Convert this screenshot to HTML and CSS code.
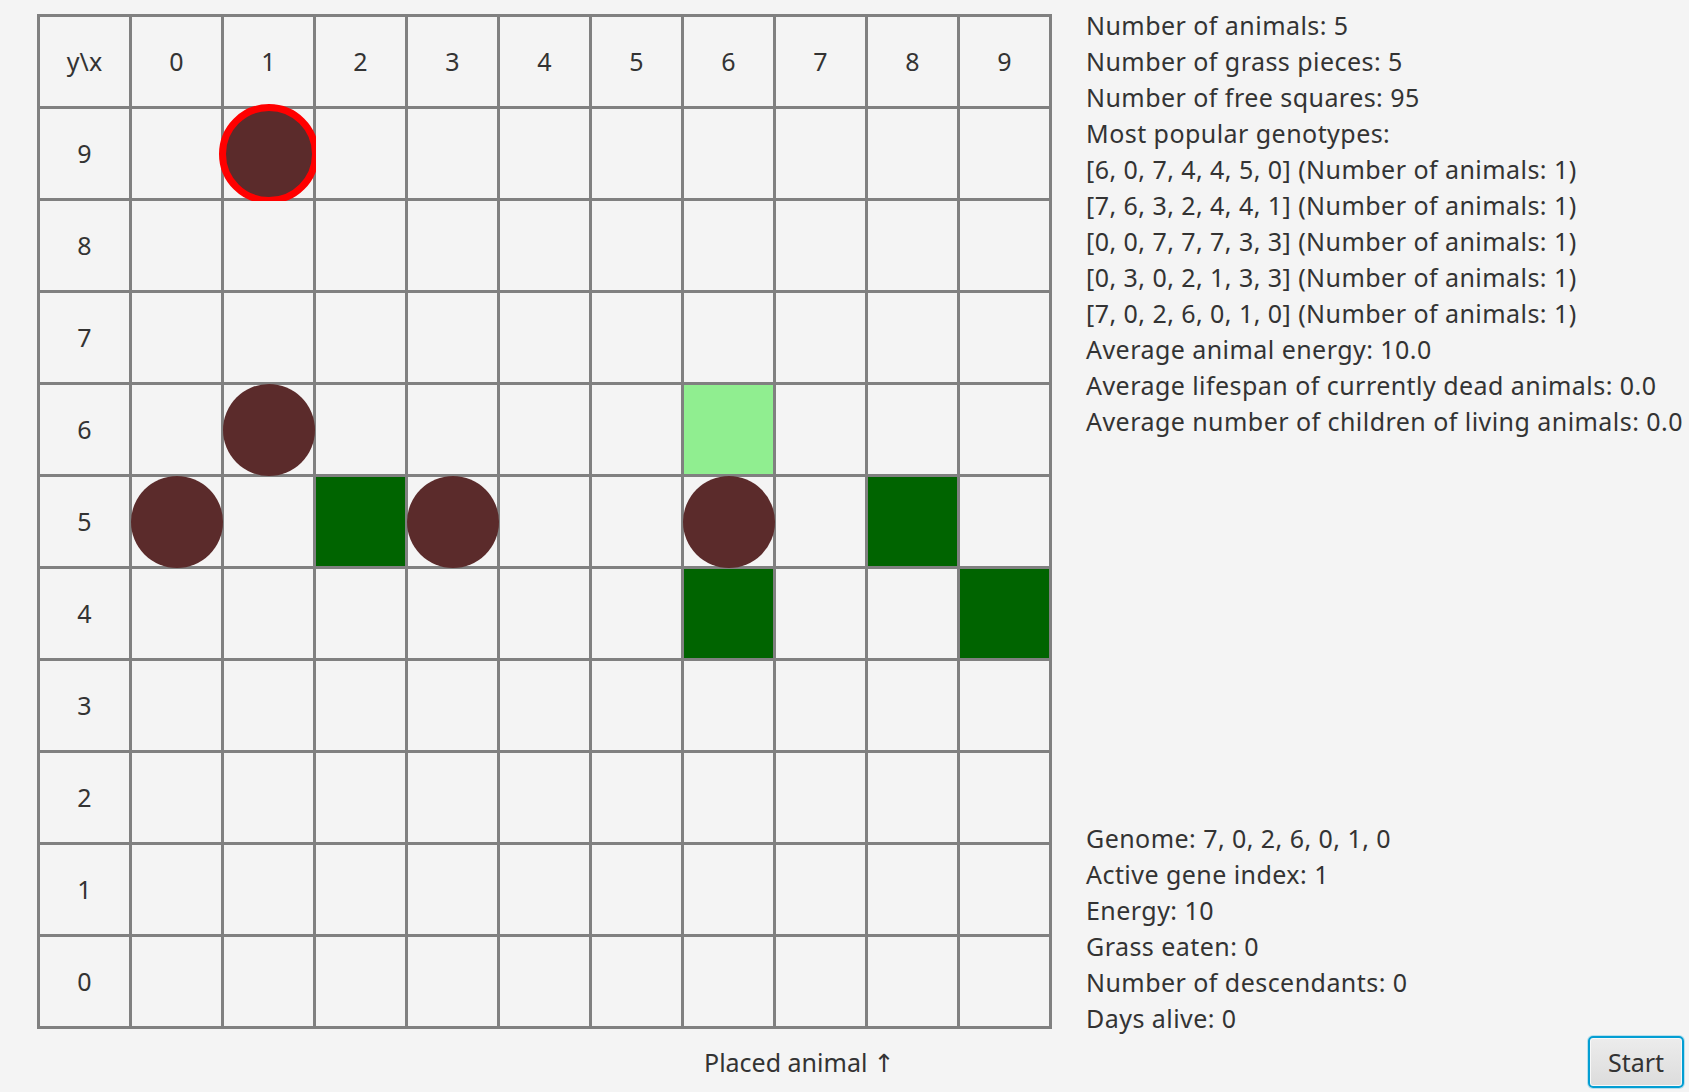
FILE: index.html
```html
<!DOCTYPE html>
<html>
<head>
<meta charset="utf-8">
<link rel="stylesheet" href="styles.css">
</head>
<body>
<div class="main">
  <div class="board">
    <div class="cell">y\x</div><div class="cell">0</div><div class="cell">1</div><div class="cell">2</div><div class="cell">3</div><div class="cell">4</div><div class="cell">5</div><div class="cell">6</div><div class="cell">7</div><div class="cell">8</div><div class="cell">9</div>

    <div class="cell">9</div><div class="cell"></div><div class="cell"><div class="animal selected"></div></div><div class="cell"></div><div class="cell"></div><div class="cell"></div><div class="cell"></div><div class="cell"></div><div class="cell"></div><div class="cell"></div><div class="cell"></div>

    <div class="cell">8</div><div class="cell"></div><div class="cell"></div><div class="cell"></div><div class="cell"></div><div class="cell"></div><div class="cell"></div><div class="cell"></div><div class="cell"></div><div class="cell"></div><div class="cell"></div>

    <div class="cell">7</div><div class="cell"></div><div class="cell"></div><div class="cell"></div><div class="cell"></div><div class="cell"></div><div class="cell"></div><div class="cell"></div><div class="cell"></div><div class="cell"></div><div class="cell"></div>

    <div class="cell">6</div><div class="cell"></div><div class="cell"><div class="animal"></div></div><div class="cell"></div><div class="cell"></div><div class="cell"></div><div class="cell"></div><div class="cell grass-light"></div><div class="cell"></div><div class="cell"></div><div class="cell"></div>

    <div class="cell">5</div><div class="cell"><div class="animal"></div></div><div class="cell"></div><div class="cell grass-dark"></div><div class="cell"><div class="animal"></div></div><div class="cell"></div><div class="cell"></div><div class="cell"><div class="animal"></div></div><div class="cell"></div><div class="cell grass-dark"></div><div class="cell"></div>

    <div class="cell">4</div><div class="cell"></div><div class="cell"></div><div class="cell"></div><div class="cell"></div><div class="cell"></div><div class="cell"></div><div class="cell grass-dark"></div><div class="cell"></div><div class="cell"></div><div class="cell grass-dark"></div>

    <div class="cell">3</div><div class="cell"></div><div class="cell"></div><div class="cell"></div><div class="cell"></div><div class="cell"></div><div class="cell"></div><div class="cell"></div><div class="cell"></div><div class="cell"></div><div class="cell"></div>

    <div class="cell">2</div><div class="cell"></div><div class="cell"></div><div class="cell"></div><div class="cell"></div><div class="cell"></div><div class="cell"></div><div class="cell"></div><div class="cell"></div><div class="cell"></div><div class="cell"></div>

    <div class="cell">1</div><div class="cell"></div><div class="cell"></div><div class="cell"></div><div class="cell"></div><div class="cell"></div><div class="cell"></div><div class="cell"></div><div class="cell"></div><div class="cell"></div><div class="cell"></div>

    <div class="cell">0</div><div class="cell"></div><div class="cell"></div><div class="cell"></div><div class="cell"></div><div class="cell"></div><div class="cell"></div><div class="cell"></div><div class="cell"></div><div class="cell"></div><div class="cell"></div>
  </div>

  <div class="side">
    <div class="stats">
      <div>Number of animals: 5</div>
      <div>Number of grass pieces: 5</div>
      <div>Number of free squares: 95</div>
      <div>Most popular genotypes:</div>
      <div>[6, 0, 7, 4, 4, 5, 0] (Number of animals: 1)</div>
      <div>[7, 6, 3, 2, 4, 4, 1] (Number of animals: 1)</div>
      <div>[0, 0, 7, 7, 7, 3, 3] (Number of animals: 1)</div>
      <div>[0, 3, 0, 2, 1, 3, 3] (Number of animals: 1)</div>
      <div>[7, 0, 2, 6, 0, 1, 0] (Number of animals: 1)</div>
      <div>Average animal energy: 10.0</div>
      <div>Average lifespan of currently dead animals: 0.0</div>
      <div>Average number of children of living animals: 0.0</div>
    </div>
    <div class="stats">
      <div>Genome: 7, 0, 2, 6, 0, 1, 0</div>
      <div>Active gene index: 1</div>
      <div>Energy: 10</div>
      <div>Grass eaten: 0</div>
      <div>Number of descendants: 0</div>
      <div>Days alive: 0</div>
    </div>
  </div>
</div>
<div class="footer">
  <div class="placed">Placed animal ↑</div>
  <button class="start">Start</button>
</div>
</body>
</html>
```

FILE: styles.css
```css
html, body {
  margin: 0;
  padding: 0;
}
body {
  width: 1689px;
  height: 1092px;
  overflow: hidden;
  background: #f4f4f4;
  color: #333333;
  font-family: "Noto Sans", "DejaVu Sans", sans-serif;
  font-size: 25px;
}
.main {
  display: flex;
  align-items: flex-start;
  padding: 7px 0 0 37px;
}
.board {
  margin-top: 7px;
  display: grid;
  grid-template-columns: repeat(11, 89px);
  grid-template-rows: repeat(11, 89px);
  gap: 3px;
  padding: 3px;
  background: #808080;
}
.cell {
  background: #f4f4f4;
  display: flex;
  align-items: center;
  justify-content: center;
  line-height: 1;
}
.grass-dark {
  background: #006400;
}
.grass-light {
  background: #90ee90;
}
.animal {
  flex: 0 0 auto;
  width: 92px;
  height: 92px;
  border-radius: 50%;
  background: #5b2b2b;
}
.animal.selected {
  width: 100px;
  height: 100px;
  box-sizing: border-box;
  border: 7px solid #ff0000;
}
.side {
  margin-left: 34px;
  height: 1029px;
  display: flex;
  flex-direction: column;
  justify-content: space-between;
}
.stats {
  line-height: 36px;
  white-space: nowrap;
  letter-spacing: 0.45px;
}
.footer {
  display: flex;
  align-items: baseline;
}
.placed {
  margin-left: 704px;
}
.start {
  margin-left: auto;
  margin-right: 5px;
  width: 96px;
  height: 52px;
  box-sizing: border-box;
  border: 2px solid #039ed3;
  border-radius: 5px;
  box-shadow: 0 0 0 1px rgba(3, 158, 211, 0.25), inset 0 0 0 1px #f8f8f8;
  background: linear-gradient(#ececec, #dcdcdc);
  font-family: "Noto Sans", "DejaVu Sans", sans-serif;
  font-size: 25px;
  color: #333333;
  padding: 0;
}
```
